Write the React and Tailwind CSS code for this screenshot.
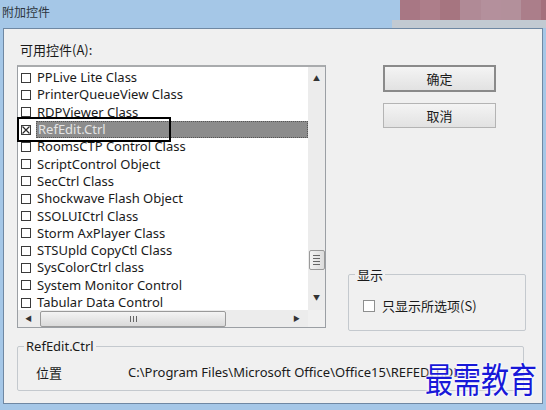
import React from 'react';

const controls = [
  'PPLive Lite Class',
  'PrinterQueueView Class',
  'RDPViewer Class',
  'RefEdit.Ctrl',
  'RoomsCTP Control Class',
  'ScriptControl Object',
  'SecCtrl Class',
  'Shockwave Flash Object',
  'SSOLUICtrl Class',
  'Storm AxPlayer Class',
  'STSUpld CopyCtl Class',
  'SysColorCtrl class',
  'System Monitor Control',
  'Tabular Data Control',
];

const latin = "font-['Noto_Sans','Noto_Sans_CJK_SC',sans-serif]";
const cjk = "font-['Noto_Sans_CJK_SC',sans-serif]";

function Box({ checked }) {
  return (
    <span className="flex h-[10px] w-[10px] flex-none items-center justify-center border border-[#3a3a3a] bg-white">
      {checked && (
        <svg width="8" height="8" viewBox="0 0 8 8">
          <path d="M0.5 0.5 L7.5 7.5 M7.5 0.5 L0.5 7.5" stroke="#2a2a2a" strokeWidth="1.2" />
        </svg>
      )}
    </span>
  );
}

function ControlRow({ name, selected }) {
  return (
    <div className="flex h-[17.3px] items-center pl-[3px]">
      <Box checked={selected} />
      <span
        className={
          selected
            ? 'ml-[5px] flex h-[17px] flex-1 items-center border border-dotted border-[#555] bg-[#8c8c8c] pl-[1px] text-[#e4e4e4]'
            : 'ml-[6px] text-[#1a1a1a]'
        }
      >
        {name}
      </span>
    </div>
  );
}

function VScroll() {
  return (
    <div className="flex w-[17px] flex-col items-center bg-[#ececec]">
      <span className="mt-[8px] text-[7px] leading-none text-[#333]">▲</span>
      <div className="flex-1" />
      <div className="mb-[24px] flex h-[20px] w-[16px] flex-col items-center justify-center gap-[2px] rounded-[2px] border border-[#9a9a9a] bg-gradient-to-r from-[#f2f2f2] to-[#dcdcdc]">
        <span className="h-px w-[7px] bg-[#666]" />
        <span className="h-px w-[7px] bg-[#666]" />
        <span className="h-px w-[7px] bg-[#666]" />
        <span className="h-px w-[7px] bg-[#666]" />
      </div>
      <span className="mb-[9px] text-[7px] leading-none text-[#333]">▼</span>
    </div>
  );
}

function HScroll() {
  return (
    <div className="flex h-[17px] items-center bg-[#ececec]">
      <span className="ml-[7px] text-[7px] leading-none text-[#333]">◀</span>
      <div className="ml-[8px] flex h-[16px] w-[186px] items-center justify-center gap-[2px] rounded-[2px] border border-[#9a9a9a] bg-gradient-to-b from-[#f4f4f4] to-[#dadada]">
        <span className="h-[6px] w-px bg-[#666]" />
        <span className="h-[6px] w-px bg-[#666]" />
        <span className="h-[6px] w-px bg-[#666]" />
      </div>
      <div className="flex-1" />
      <span className="mr-[8px] text-[7px] leading-none text-[#333]">▶</span>
    </div>
  );
}

function GroupBox({ label, className, children }) {
  return (
    <fieldset className={`rounded-[2px] border border-[#c4c9ce] ${className}`}>
      <legend className={`ml-[6px] px-[2px] text-[13px] leading-[15px] text-[#1a1a1a] ${label.kind}`}>{label.text}</legend>
      {children}
    </fieldset>
  );
}

export default function App() {
  return (
    <div className={`relative h-[410px] w-[546px] overflow-hidden bg-[#a5c7e7] ${latin}`}>
      <div className="relative h-[28px]">
        <div className={`pl-[2px] pt-[4px] text-[12px] leading-[16px] text-[#2d3640] ${cjk}`}>附加控件</div>
        <div className="absolute right-0 top-0 flex h-[20px] w-[146px]">
          <span className="flex-1 bg-[#a87784]" />
          <span className="flex-1 bg-[#ad7e8a]" />
          <span className="flex-1 bg-[#a67580]" />
          <span className="flex-1 bg-[#b08a96]" />
          <span className="flex-1 bg-[#b4909c]" />
          <span className="flex-1 bg-[#b3909b]" />
          <span className="flex-1 bg-[#ab7e8a]" />
          <span className="w-[5px] bg-[#a4717d]" />
        </div>
        <div className="absolute bottom-0 right-0 h-[8px] w-[154px] bg-[#c2cad2]" />
      </div>

      <div className="mx-[3px] h-[376px] border border-[#6f88a3] bg-[#f0f0f0] pl-[13px] pr-[15px] pt-[13px]">
        <div className="flex">
          <div className="w-[309px]">
            <div className={`h-[16px] pl-[3px] text-[13px] leading-[16px] text-[#1a1a1a] ${cjk}`}>可用控件(A):</div>
            <div className="relative mt-[7px] flex h-[263px] flex-col border border-[#9b9fa4] border-t-2 border-t-[#a9abad] bg-white">
              <div className="flex min-h-0 flex-1">
                <div className="flex-1 overflow-hidden pt-[2px] text-[13px] leading-none">
                  {controls.map((name) => (
                    <ControlRow key={name} name={name} selected={name === 'RefEdit.Ctrl'} />
                  ))}
                </div>
                <VScroll />
              </div>
              <div className="flex">
                <div className="flex-1">
                  <HScroll />
                </div>
                <div className="w-[17px] bg-[#f0f0f0]" />
              </div>
              <div className="absolute left-[-1px] top-[50px] h-[25px] w-[154px] border-2 border-black" />
            </div>
          </div>

          <div className="ml-[22px] flex flex-1 flex-col">
            <div className="ml-[35px] mt-[23px] flex w-[113px] flex-col gap-[11px]">
              <button className={`h-[27px] border-2 border-[#8a8a8a] bg-gradient-to-b from-[#f4f4f4] to-[#e2e2e2] text-[13px] text-[#1a1a1a] ${cjk}`}>
                确定
              </button>
              <button className={`h-[25px] border border-[#b4b4b4] bg-gradient-to-b from-[#f4f4f4] to-[#e2e2e2] text-[13px] text-[#1a1a1a] ${cjk}`}>
                取消
              </button>
            </div>
            <GroupBox label={{ text: '显示', kind: cjk }} className="mt-[139px] h-[64px] w-[178px]">
              <div className="flex items-center pl-[14px] pt-[17px]">
                <span className="h-[12px] w-[12px] border border-[#8e8f8f] bg-white" />
                <span className={`ml-[7px] text-[13px] leading-none text-[#1a1a1a] ${cjk}`}>只显示所选项(S)</span>
              </div>
            </GroupBox>
          </div>
        </div>

        <GroupBox label={{ text: 'RefEdit.Ctrl', kind: latin }} className="relative mt-[8px] h-[52px] w-[507px]">
          <div className="flex items-center pl-[18px] pt-[12px] text-[13px] leading-none text-[#1a1a1a]">
            <span className={`w-[92px] ${cjk}`}>位置</span>
            <span className="whitespace-nowrap">C:\Program Files\Microsoft Office\Office15\REFEDIT.DLL</span>
          </div>
          <div
            className={`absolute right-[-14px] top-[6px] origin-top scale-y-125 text-[28px] leading-none tracking-[0px] text-[#1818d8] [text-shadow:0_0_2px_#fff,0_0_2px_#fff,0_0_3px_#fff] ${cjk}`}
          >
            最需教育
          </div>
        </GroupBox>
      </div>
    </div>
  );
}
